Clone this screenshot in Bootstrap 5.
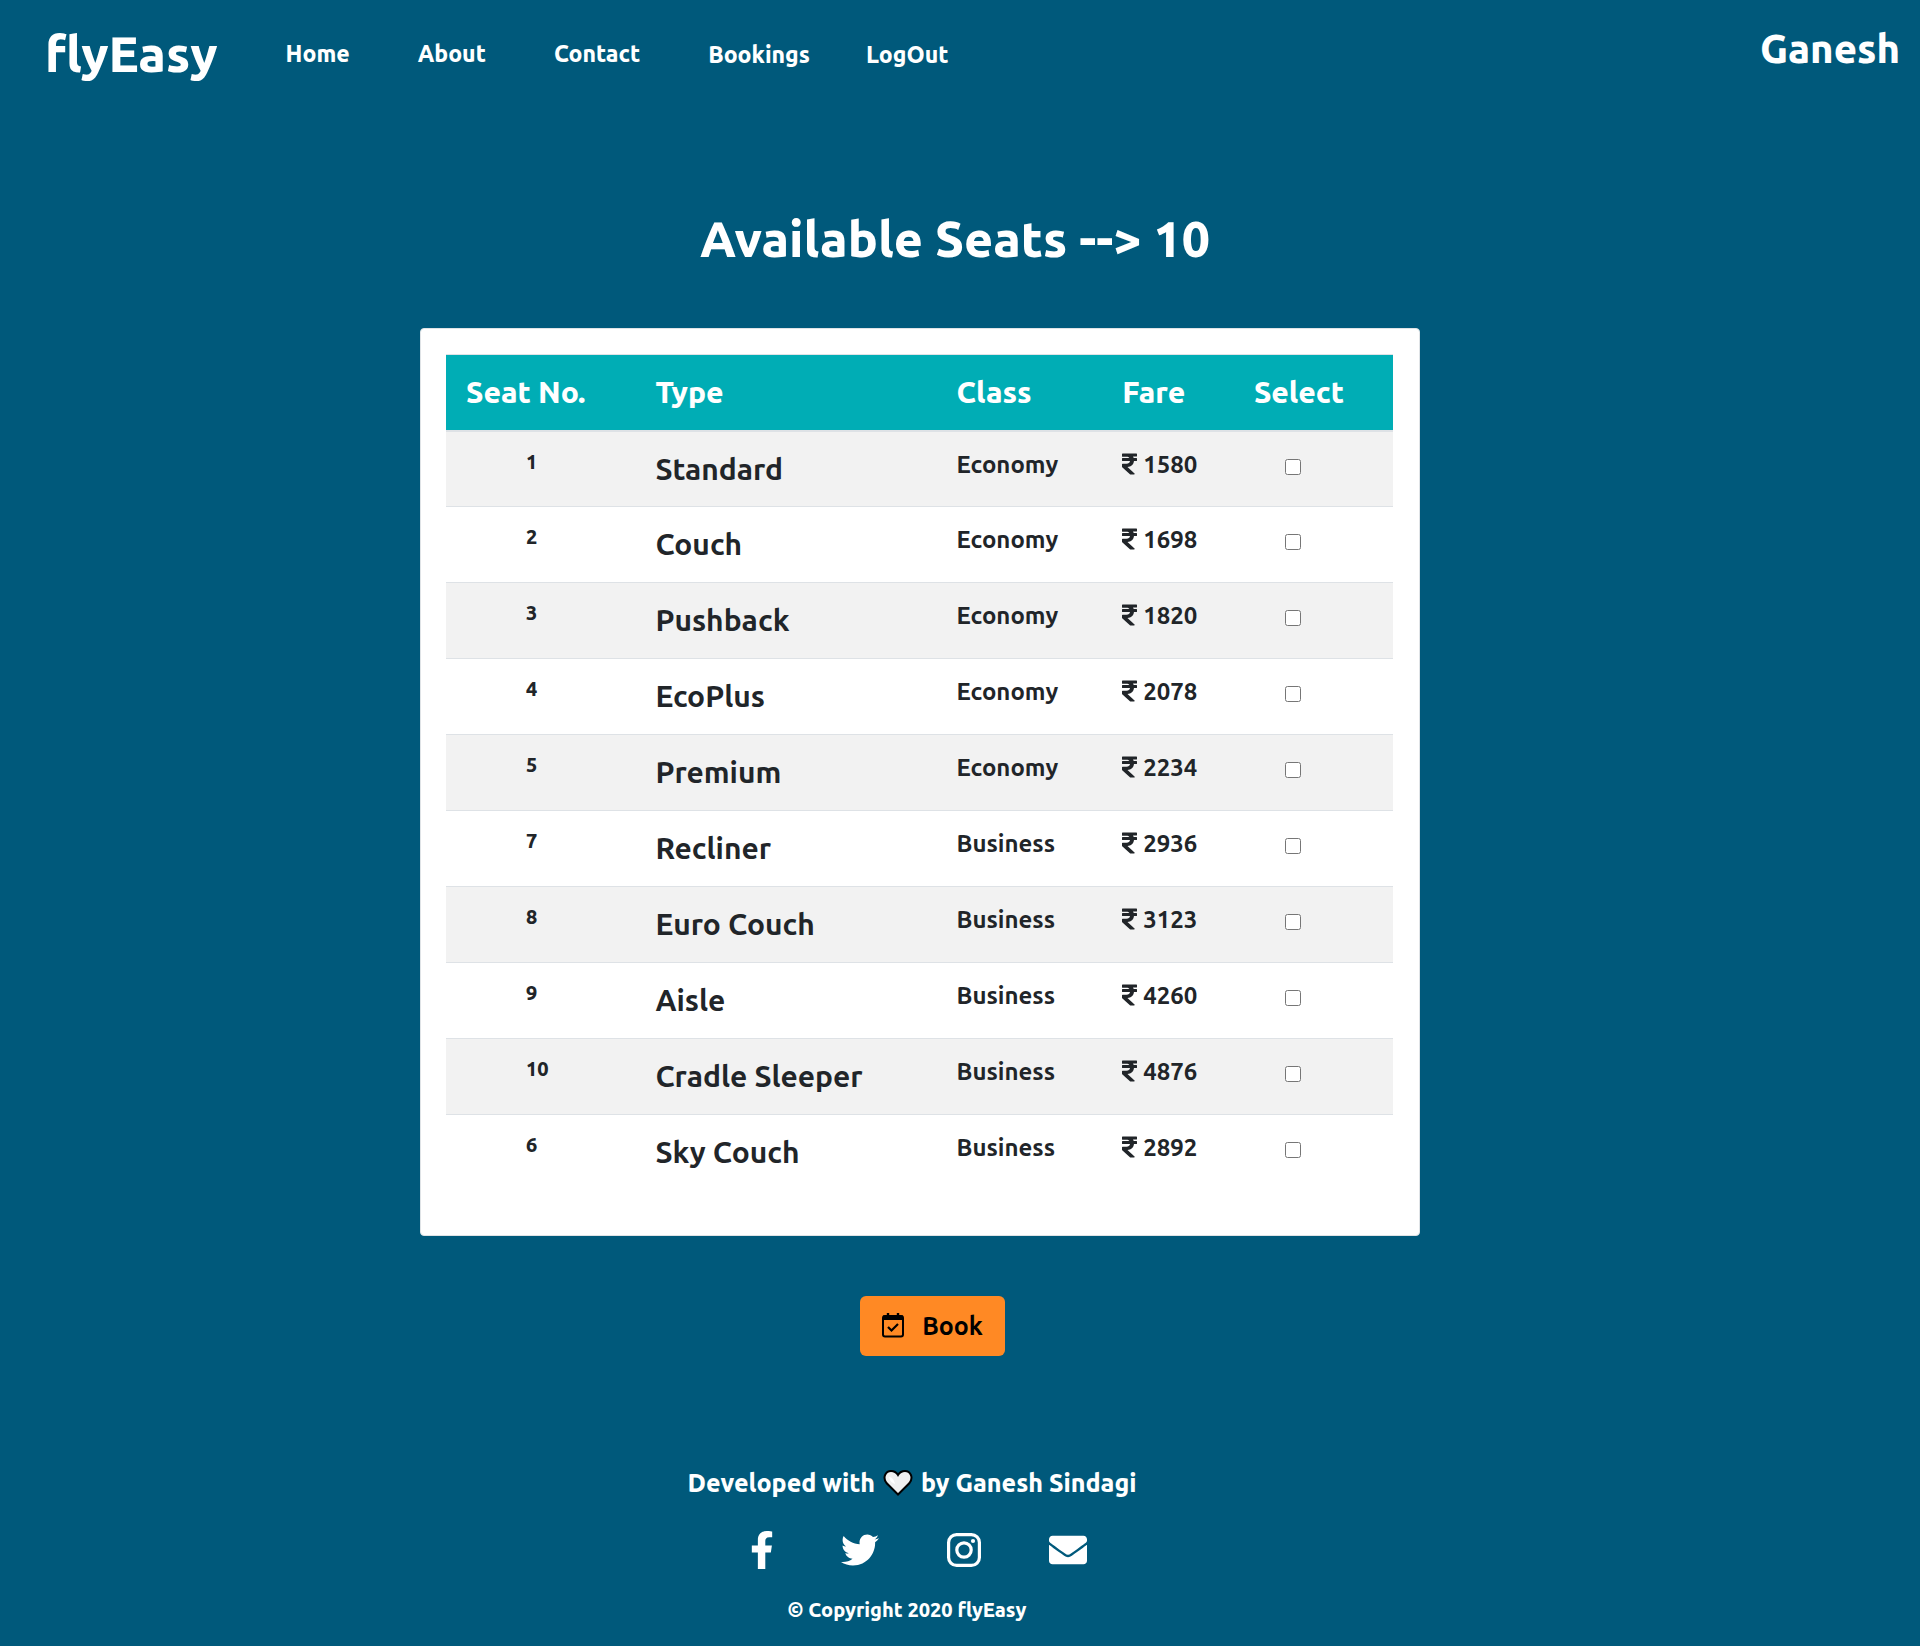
<!DOCTYPE html>
<html lang="en">
<head>
<meta charset="utf-8">
<meta name="viewport" content="width=device-width, initial-scale=1">
<title>flyEasy</title>
<link href="https://cdn.jsdelivr.net/npm/bootstrap@5.3.0/dist/css/bootstrap.min.css" rel="stylesheet">
<style>
body { background: #00597b; color: #fff; font-family: Ubuntu, "Noto Sans", sans-serif; font-weight: 700; }
.heavy { font-weight: 800; }
.site-nav { padding: 18px 20px 0 45px; }
.site-nav .navbar-brand { font-size: 50px; line-height: 70px; margin-right: 60px; padding: 0; }
.site-nav .nav-link { font-size: 23px; line-height: 32px; font-weight: 800; padding-top: 20px; padding-bottom: 20px; }
.menu-list { gap: 52px; }
.account-list { gap: 40px; margin-left: 52px; padding-top: 1px; }
.user-name { font-size: 40px; line-height: 62px; }
.seat-title { font-size: 50px; line-height: 72px; margin: 111px 10px 54px 0; }
.shifted { padding-right: 80px; }
.seat-card { width: 1000px; max-width: 100%; padding: 25px 26px 44px 25px; border: 1px solid #dfe3e6; border-radius: 4px; }
.seat-table { --bs-table-striped-bg: #f2f2f2; --bs-table-striped-color: #212529; table-layout: fixed; }
.seat-table > :not(caption) > * > * { padding: 15px 0 14px 20px; border-bottom: 0; border-top: 1px solid #dee2e6; height: 76px; vertical-align: top; }
.seat-table > thead > tr > th { background: #00adb5; color: #fff; font-size: 30px; line-height: 44px; font-weight: 800; }
.seat-table > tbody > tr:first-child > * { border-top-width: 2px; }
.seat-table .seat-no { font-size: 20px; line-height: 30px; font-weight: 800; padding-left: 80px; }
.seat-table .seat-type { font-size: 30px; line-height: 45px; font-weight: 700; }
.seat-table .seat-info { font-size: 24px; line-height: 36px; font-weight: 700; }
.seat-table .seat-pick { padding: 27px 0 0 51px; line-height: 16px; }
.seat-pick input { width: 16px; height: 16px; margin: 0; display: block; }
.rupee { width: 15px; height: 24px; margin-right: 6px; vertical-align: -3px; }
.book-btn { --bs-btn-bg: #ff8924; --bs-btn-color: #000; --bs-btn-hover-bg: #f47c14; --bs-btn-hover-color: #000; --bs-btn-border-radius: 6px; font-size: 25px; line-height: 36px; font-weight: 700; padding: 11px 21px; margin-top: 60px; }
.book-row { padding-right: 55px; }
.site-foot { padding: 107px 96px 8px 0; }
.made-by { font-size: 25px; line-height: 40px; }
.social-list { gap: 67px; margin: 28px 0 26px; padding-left: 12px; }
.copy-line { font-size: 20px; line-height: 30px; padding-right: 10px; }
</style>
</head>
<body>
<nav class="site-nav navbar navbar-expand navbar-dark align-items-start">
  <a class="navbar-brand text-white heavy" href="#">flyEasy</a>
  <ul class="navbar-nav menu-list">
    <li class="nav-item"><a class="nav-link text-white" href="#">Home</a></li>
    <li class="nav-item"><a class="nav-link text-white" href="#">About</a></li>
    <li class="nav-item"><a class="nav-link text-white" href="#">Contact</a></li>
  </ul>
  <ul class="navbar-nav account-list me-auto">
    <li class="nav-item"><a class="nav-link text-white" href="#">Bookings</a></li>
    <li class="nav-item"><a class="nav-link text-white" href="#">LogOut</a></li>
  </ul>
  <span class="user-name heavy">Ganesh</span>
</nav>

<main>
  <h1 class="seat-title text-center heavy">Available Seats --&gt; 10</h1>
  <div class="shifted">
    <div class="card seat-card mx-auto">
      <table class="table table-striped seat-table mb-0">
        <colgroup><col style="width:20%"><col style="width:31.8%"><col style="width:17.5%"><col style="width:13.9%"><col></colgroup>
        <thead><tr><th scope="col">Seat No.</th><th scope="col">Type</th><th scope="col">Class</th><th scope="col">Fare</th><th scope="col">Select</th></tr></thead>
        <tbody id="seats"></tbody>
      </table>
    </div>
  </div>
  <div class="book-row text-center">
    <button type="button" class="btn book-btn d-inline-flex align-items-center gap-3">
      <svg width="24" height="26" viewBox="1 1 24 26" aria-hidden="true"><rect x="2" y="4" width="20" height="20.500" rx="2" fill="none" stroke="#000" stroke-width="2"/><path d="M7 1V5M17 1V5" fill="none" stroke="#000" stroke-width="2.400"/><path d="M2 3.500h20V8H2z"/><path d="m7 15 3.500 3.500 6.500-6.500" fill="none" stroke="#000" stroke-width="2.200"/></svg>
      Book
    </button>
  </div>
</main>

<footer class="site-foot d-flex flex-column align-items-center">
  <div class="made-by heavy d-flex align-items-center gap-2">Developed with
    <svg width="30" height="28" viewBox="0 0 30 28" role="img" aria-label="love"><path d="M15 25.500 3.500 14C-1 8 3 2 8 2c3 0 5.500 1.500 7 4 1.500-2.500 4-4 7-4 5 0 9 6 4.500 12z" fill="#f0f0f0" stroke="#000" stroke-width="2"/><path d="M6 8c1 4 3 6 6 7-1-4-3-7-6-7" fill="#fff"/></svg>
    by Ganesh Sindagi</div>
  <div class="social-list d-flex align-items-center">
    <a href="#" aria-label="Facebook"><svg class="d-block" width="24" height="38" viewBox="0 0 320 512" fill="#fff"><path d="M279.140 288l14.220-92.660h-88.910v-60.130c0-25.350 12.420-50.060 52.240-50.060h40.420V6.260S260.430 0 225.360 0c-73.220 0-121.080 44.380-121.080 124.720v70.620H22.890V288h81.390v224h100.170V288z"/></svg></a>
    <a href="#" aria-label="Twitter"><svg class="d-block" width="38" height="38" viewBox="0 0 512 512" fill="#fff"><path d="M459.370 151.716c.325 4.548.325 9.097.325 13.645 0 138.720-105.583 298.558-298.558 298.558-59.452 0-114.680-17.219-161.137-47.106 8.447.974 16.568 1.299 25.340 1.299 49.055 0 94.213-16.568 130.274-44.832-46.132-.975-84.792-31.188-98.112-72.772 6.498.974 12.995 1.624 19.818 1.624 9.421 0 18.843-1.300 27.614-3.573-48.081-9.747-84.143-51.980-84.143-102.985v-1.299c13.969 7.797 30.214 12.670 47.431 13.319-28.264-18.843-46.781-51.005-46.781-87.391 0-19.492 5.197-37.360 14.294-52.954 51.655 63.675 129.300 105.258 216.365 109.807-1.624-7.797-2.599-15.918-2.599-24.040 0-57.828 46.782-104.934 104.934-104.934 30.213 0 57.502 12.670 76.670 33.137 23.715-4.548 46.456-13.320 66.599-25.340-7.798 24.366-24.366 44.833-46.132 57.827 21.117-2.273 41.584-8.122 60.426-16.243-14.292 20.791-32.161 39.308-52.628 54.253z"/></svg></a>
    <a href="#" aria-label="Instagram"><svg class="d-block" width="36" height="36" viewBox="0 0 36 36" fill="none" stroke="#fff" stroke-width="3.200"><rect x="2.600" y="2.600" width="30.800" height="30.800" rx="8"/><circle cx="18" cy="18" r="7.200"/><circle cx="27" cy="9" r="2.100" fill="#fff" stroke="none"/></svg></a>
    <a href="#" aria-label="Email"><svg class="d-block" width="38" height="38" viewBox="0 0 512 512" fill="#fff"><path d="M502.300 190.800c3.900-3.100 9.700-.2 9.700 4.700V400c0 26.500-21.500 48-48 48H48c-26.500 0-48-21.500-48-48V195.600c0-5 5.700-7.800 9.700-4.700 22.400 17.400 52.100 39.500 154.100 113.600 21.100 15.400 56.700 47.800 92.200 47.600 35.700.3 72-32.800 92.300-47.600 102-74.100 131.600-96.300 154-113.700zM256 320c23.200.4 56.600-29.200 73.400-41.400 132.700-96.300 142.800-104.700 173.400-128.700 5.800-4.500 9.200-11.500 9.200-18.900v-19c0-26.500-21.500-48-48-48H48c-26.500 0-48 21.500-48 48v19c0 7.400 3.400 14.300 9.200 18.900 30.600 23.900 40.700 32.400 173.400 128.700 16.800 12.200 50.200 41.800 73.400 41.400z"/></svg></a>
  </div>
  <div class="copy-line heavy">© Copyright 2020 flyEasy</div>
</footer>

<script>
const seats = [
  [1, 'Standard', 'Economy', 1580], [2, 'Couch', 'Economy', 1698], [3, 'Pushback', 'Economy', 1820],
  [4, 'EcoPlus', 'Economy', 2078], [5, 'Premium', 'Economy', 2234], [7, 'Recliner', 'Business', 2936],
  [8, 'Euro Couch', 'Business', 3123], [9, 'Aisle', 'Business', 4260], [10, 'Cradle Sleeper', 'Business', 4876],
  [6, 'Sky Couch', 'Business', 2892]
];
const rupee = '<svg class="rupee" viewBox="0 0 320 512" role="img" aria-label="Rupees" fill="#212529"><path d="M308 96c6.627 0 12-5.373 12-12V44c0-6.627-5.373-12-12-12H12C5.373 32 0 37.373 0 44v44.748c0 6.627 5.373 12 12 12h85.280c27.308 0 48.261 9.958 60.970 27.252H12c-6.627 0-12 5.373-12 12v40c0 6.627 5.373 12 12 12h158.757c-6.217 36.086-32.961 58.632-74.757 58.632H12c-6.627 0-12 5.373-12 12v53.012c0 3.349 1.400 6.546 3.861 8.818l165.052 152.356a12 12 0 0 0 8.139 3.182h82.562c10.924 0 16.166-13.408 8.139-20.818L116.871 319.906c76.499-2.340 131.144-53.395 138.318-127.906H308c6.627 0 12-5.373 12-12v-40c0-6.627-5.373-12-12-12h-58.690c-3.486-11.541-8.280-22.246-14.252-32H308z"/></svg>';
document.getElementById('seats').innerHTML = seats.map(([no, type, cls, fare]) =>
  `<tr><td class="seat-no">${no}</td><td class="seat-type">${type}</td><td class="seat-info">${cls}</td><td class="seat-info">${rupee}${fare}</td><td class="seat-pick"><input type="checkbox" aria-label="Select seat ${no}"></td></tr>`).join('');
</script>
<script src="https://cdn.jsdelivr.net/npm/bootstrap@5.3.0/dist/js/bootstrap.bundle.min.js"></script>
</body>
</html>
